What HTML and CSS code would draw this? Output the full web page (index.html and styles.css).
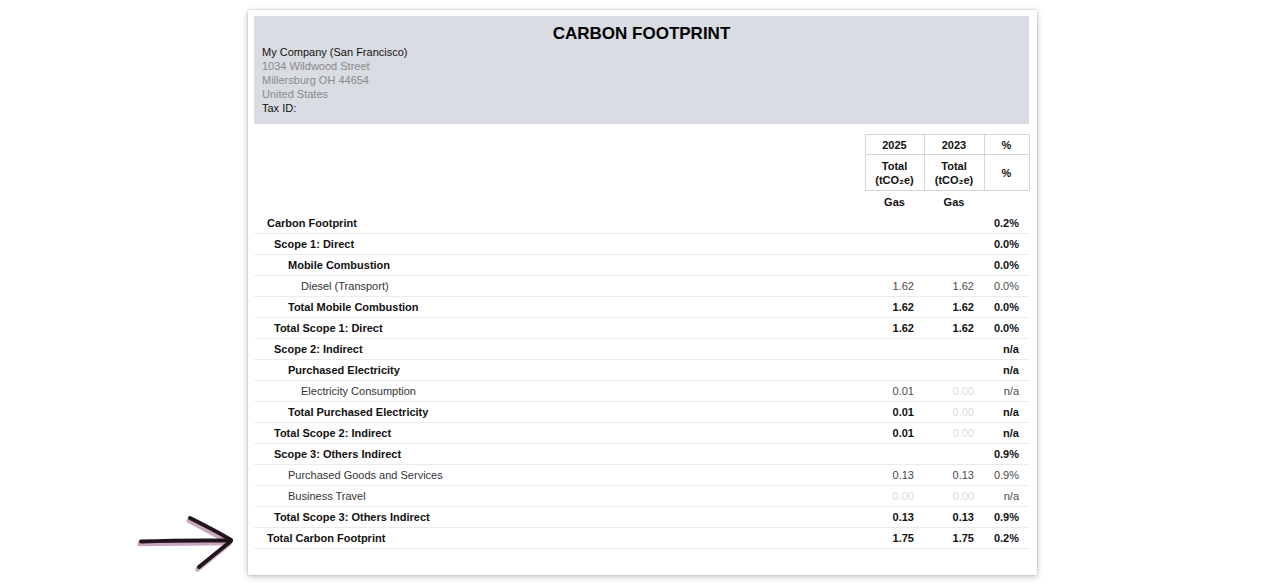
FILE: index.html
```html
<!DOCTYPE html>
<html lang="en">
<head>
<meta charset="utf-8">
<title>Carbon Footprint</title>
<link rel="stylesheet" href="styles.css">
</head>
<body>
<div class="canvas">
  <svg class="arrow" width="104" height="62" viewBox="0 0 104 62" aria-hidden="true">
    <g class="arrow-shadow" transform="translate(-1.5 2.5)">
      <path d="M3 27.5 L91 26.5"/>
      <path d="M52 4 L93 26"/>
      <path d="M93 27 L61 53"/>
    </g>
    <g class="arrow-ink">
      <path d="M3 27.5 C30 26.5 60 26.2 91 26.5"/>
      <path d="M52 4 C66 11 80 18 93 26"/>
      <path d="M93 27 C82 36 72 44 61 53"/>
    </g>
  </svg>

  <div class="paper">
    <div class="sheet-header">
      <div class="title">CARBON FOOTPRINT</div>
      <div class="company">My Company (San Francisco)</div>
      <div class="address">1034 Wildwood Street</div>
      <div class="address">Millersburg OH 44654</div>
      <div class="address">United States</div>
      <div class="company">Tax ID:</div>
    </div>

    <table class="report">
      <colgroup>
        <col class="c-label">
        <col class="c-y1">
        <col class="c-y2">
        <col class="c-pct">
      </colgroup>
      <thead>
        <tr class="h1">
          <th class="blank"></th>
          <th class="hc">2025</th>
          <th class="hc">2023</th>
          <th class="hc">%</th>
        </tr>
        <tr class="h2">
          <th class="blank"></th>
          <th class="hc">Total<br>(tCO₂e)</th>
          <th class="hc">Total<br>(tCO₂e)</th>
          <th class="hc">%</th>
        </tr>
        <tr class="h3">
          <th class="blank"></th>
          <th class="gas">Gas</th>
          <th class="gas">Gas</th>
          <th class="gas"></th>
        </tr>
      </thead>
      <tbody>
        <tr class="b"><td class="l0">Carbon Footprint</td><td></td><td></td><td class="num">0.2%</td></tr>
        <tr class="b"><td class="l1">Scope 1: Direct</td><td></td><td></td><td class="num">0.0%</td></tr>
        <tr class="b"><td class="l2">Mobile Combustion</td><td></td><td></td><td class="num">0.0%</td></tr>
        <tr class="r"><td class="l3">Diesel (Transport)</td><td class="num">1.62</td><td class="num">1.62</td><td class="num">0.0%</td></tr>
        <tr class="b"><td class="l2">Total Mobile Combustion</td><td class="num">1.62</td><td class="num">1.62</td><td class="num">0.0%</td></tr>
        <tr class="b"><td class="l1">Total Scope 1: Direct</td><td class="num">1.62</td><td class="num">1.62</td><td class="num">0.0%</td></tr>
        <tr class="b"><td class="l1">Scope 2: Indirect</td><td></td><td></td><td class="num">n/a</td></tr>
        <tr class="b"><td class="l2">Purchased Electricity</td><td></td><td></td><td class="num">n/a</td></tr>
        <tr class="r"><td class="l3">Electricity Consumption</td><td class="num">0.01</td><td class="num zero">0.00</td><td class="num">n/a</td></tr>
        <tr class="b"><td class="l2">Total Purchased Electricity</td><td class="num">0.01</td><td class="num zero">0.00</td><td class="num">n/a</td></tr>
        <tr class="b"><td class="l1">Total Scope 2: Indirect</td><td class="num">0.01</td><td class="num zero">0.00</td><td class="num">n/a</td></tr>
        <tr class="b"><td class="l1">Scope 3: Others Indirect</td><td></td><td></td><td class="num">0.9%</td></tr>
        <tr class="r"><td class="l2">Purchased Goods and Services</td><td class="num">0.13</td><td class="num">0.13</td><td class="num">0.9%</td></tr>
        <tr class="r"><td class="l2">Business Travel</td><td class="num zero">0.00</td><td class="num zero">0.00</td><td class="num">n/a</td></tr>
        <tr class="b"><td class="l1">Total Scope 3: Others Indirect</td><td class="num">0.13</td><td class="num">0.13</td><td class="num">0.9%</td></tr>
        <tr class="b"><td class="l0">Total Carbon Footprint</td><td class="num">1.75</td><td class="num">1.75</td><td class="num">0.2%</td></tr>
      </tbody>
    </table>
  </div>
</div>
</body>
</html>
```

FILE: styles.css
```css
html, body {
  margin: 0;
  padding: 0;
  background: #ffffff;
}

body {
  font-family: "Liberation Sans", Arial, sans-serif;
  color: #111;
  width: 1280px;
  height: 587px;
  overflow: hidden;
}

.canvas {
  position: relative;
  width: 1280px;
  height: 587px;
  display: flex;
  align-items: flex-start;
  padding: 10px 0 0 248px;
  box-sizing: border-box;
}

.arrow {
  position: absolute;
  left: 138px;
  top: 514px;
  overflow: visible;
}

.arrow path {
  fill: none;
  stroke-linecap: round;
  stroke-linejoin: round;
}

.arrow-shadow path {
  stroke: #c6a7bd;
  stroke-width: 4.4;
}

.arrow-ink path {
  stroke: #22141c;
  stroke-width: 4;
}

.paper {
  width: 789px;
  height: 565px;
  box-sizing: border-box;
  padding: 6px 8px 0 6px;
  background: #fff;
  box-shadow: 0 0 2px rgba(0, 0, 0, 0.22), 0 2px 7px rgba(0, 0, 0, 0.22);
}

.sheet-header {
  background: #d9dce2;
  height: 108px;
  box-sizing: border-box;
  padding: 7px 8px 0 8px;
}

.title {
  text-align: center;
  font-weight: bold;
  font-size: 17px;
  line-height: 21px;
  color: #000;
  margin-bottom: 1px;
}

.company,
.address {
  font-size: 11px;
  line-height: 14px;
}

.company {
  color: #111;
}

.address {
  color: #8a8a8a;
}

.report {
  margin-top: 10px;
  width: 775px;
  border-collapse: collapse;
  table-layout: fixed;
  font-size: 11px;
}

.c-label { width: 611px; }
.c-y1 { width: 59px; }
.c-y2 { width: 60px; }
.c-pct { width: 45px; }

.report th,
.report td {
  padding: 0;
}

.report th.blank {
  border: none;
}

.report th.hc {
  border: 1px solid #d6d6d6;
  font-weight: bold;
  text-align: center;
  color: #111;
  line-height: 14px;
}

.h1 th { height: 19px; }
.h2 th { height: 35px; }

.h3 th {
  height: 18px;
  font-weight: bold;
  text-align: center;
  line-height: 14px;
  color: #111;
  vertical-align: top;
  padding-top: 4px;
}

.report tbody td {
  border-bottom: 1px solid #ebebeb;
  line-height: 20px;
  white-space: nowrap;
}

.report tr.b td {
  font-weight: bold;
  color: #111;
}

.report tr.r td {
  color: #333;
}

.report tr.r td.num {
  color: #4a4a4a;
}

.report td.num {
  text-align: right;
  padding-right: 10px;
}

.report tr td.num.zero {
  color: #dcdcdc;
  font-weight: normal;
}

.l0 { padding-left: 13px !important; }
.l1 { padding-left: 20px !important; }
.l2 { padding-left: 34px !important; }
.l3 { padding-left: 47px !important; }
```
